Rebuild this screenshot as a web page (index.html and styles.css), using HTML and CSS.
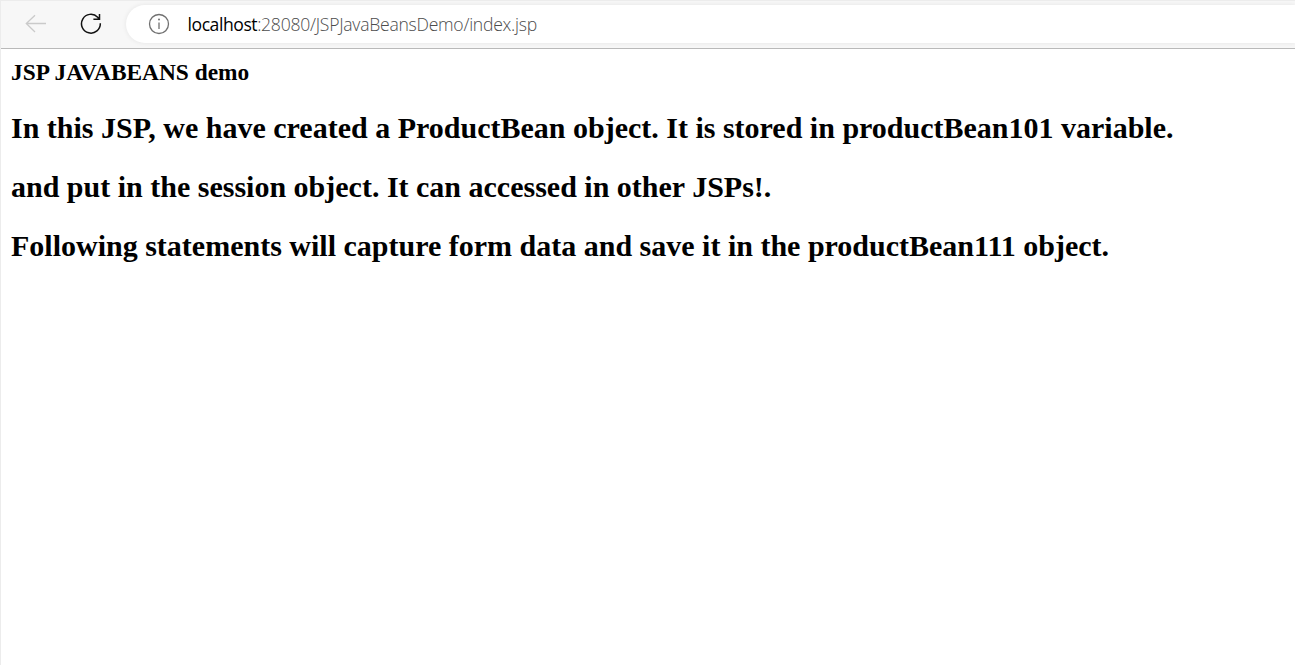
FILE: index.html
```html
<!DOCTYPE html>
<html lang="en">
<head>
<meta charset="utf-8">
<title>JSP JAVABEANS demo</title>
<link rel="stylesheet" href="styles.css">
</head>
<body>
<div class="window">
  <header class="toolbar">
    <svg class="icon back" width="22" height="20" viewBox="0 0 22 20"><path d="M10 1.2 1.3 9.5 10 18M1.3 9.5H21"/></svg>
    <svg class="icon reload" width="22" height="22" viewBox="0 0 22 22"><path d="M20.3 10.2A9.4 9.4 0 1 1 17.7 4.2L19.2 6M19.5 1V6.2H13.4"/></svg>
    <div class="address">
      <svg class="icon info" width="22" height="22" viewBox="0 0 22 22"><circle cx="11" cy="11" r="9.5"/><path d="M11 9.5V16"/><circle class="dot" cx="11" cy="6.6" r="1"/></svg>
      <span class="url"><span class="host">localhost</span>:28080/JSPJavaBeansDemo/index.jsp</span>
    </div>
  </header>
  <main class="page">
    <h1 class="title">JSP JAVABEANS demo</h1>
    <h2 class="line">In this JSP, we have created a ProductBean object. It is stored in productBean101 variable.</h2>
    <h2 class="line">and put in the session object. It can accessed in other JSPs!.</h2>
    <h2 class="line">Following statements will capture form data and save it in the productBean111 object.</h2>
  </main>
</div>
</body>
</html>
```
FILE: styles.css
```css
* { box-sizing: border-box; }
body { margin: 0; background: #fff; }
.window {
  height: 665px;
  overflow: hidden;
  border-left: 1px solid #ececec;
}
.toolbar {
  display: flex;
  align-items: center;
  height: 49px;
  padding-left: 24px;
  padding-bottom: 1px;
  background: #f7f7f7;
  border-top: 1px solid #ececec;
  border-bottom: 1px solid #b9b9b9;
  overflow: hidden;
}
.icon { flex: none; fill: none; stroke-width: 1.3; }
.back { stroke: #cacaca; }
.reload { margin-left: 33px; stroke: #111; stroke-width: 1.5; }
.address {
  display: flex;
  align-items: center;
  flex: 1;
  height: 38px;
  margin-left: 24px;
  padding-left: 21.5px;
  background: #fff;
  border-radius: 19px 0 0 19px;
  box-shadow: 0 0 5px rgba(0, 0, 0, 0.08);
}
.info { stroke: #707070; }
.info .dot { fill: #707070; stroke: none; }
.url {
  margin-left: 18px;
  font: 300 17.6px/24px "Open Sans", sans-serif;
  letter-spacing: -0.26px;
  color: #4c4c4c;
  white-space: nowrap;
}
.host { color: #000; font-weight: 400; letter-spacing: -0.45px; }
.page {
  padding: 10px 0 0 10px;
  font-family: "Liberation Serif", serif;
  color: #000;
}
.title { margin: 0 0 26px; font-size: 23.4px; line-height: 26px; white-space: nowrap; }
.line { margin: 0 0 25px; font-size: 30px; line-height: 34px; white-space: nowrap; }
```
